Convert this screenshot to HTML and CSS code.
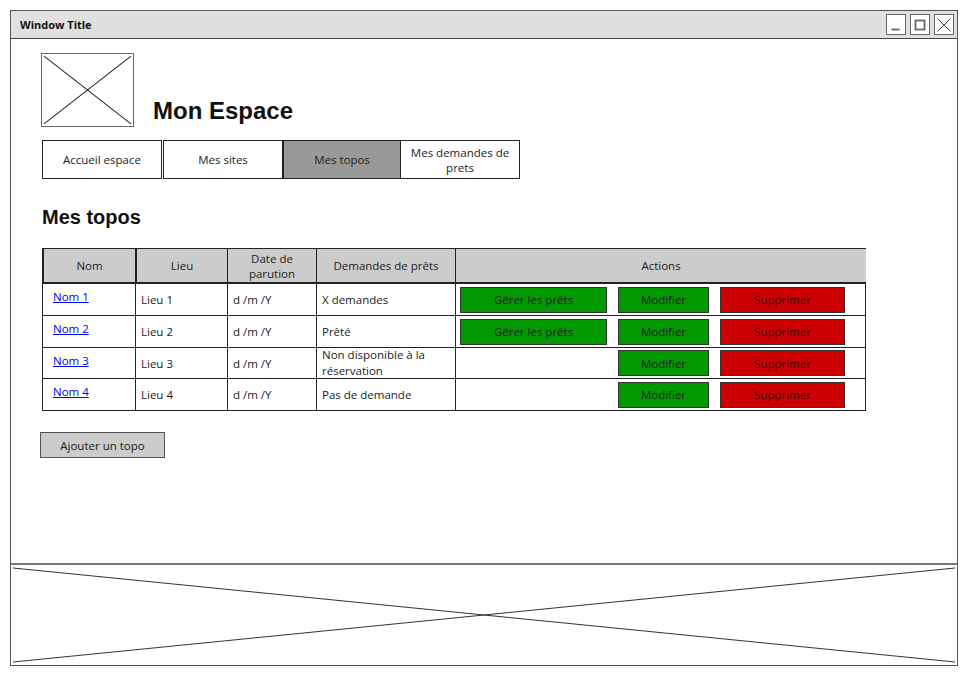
FILE: index.html
```html
<!DOCTYPE html>
<html lang="fr">
<head>
<meta charset="utf-8">
<title>Mon Espace</title>
<link rel="stylesheet" href="styles.css">
</head>
<body>
<div class="window">
  <div class="titlebar">
    <span class="wtitle">Window Title</span>
    <div class="wbtns">
      <span class="wbtn"><svg width="20" height="20" viewBox="0 0 20 20"><line x1="5" y1="15" x2="14" y2="15" stroke="#666" stroke-width="2"/></svg></span>
      <span class="wbtn"><svg width="20" height="20" viewBox="0 0 20 20"><rect x="5" y="5" width="10" height="10" fill="none" stroke="#666" stroke-width="2"/></svg></span>
      <span class="wbtn"><svg width="20" height="20" viewBox="0 0 20 20"><line x1="3" y1="3" x2="17" y2="17" stroke="#222" stroke-width="1"/><line x1="17" y1="3" x2="3" y2="17" stroke="#222" stroke-width="1"/></svg></span>
    </div>
  </div>
  <div class="content">
    <div class="head">
      <div class="logo"><svg width="100%" height="100%" viewBox="0 0 90 71" preserveAspectRatio="none"><line x1="2" y1="2" x2="88" y2="69" stroke="#222" stroke-width="1"/><line x1="88" y1="2" x2="2" y2="69" stroke="#222" stroke-width="1"/></svg></div>
      <h1 class="title">Mon Espace</h1>
    </div>
    <div class="tabs">
      <div class="tab">Accueil espace</div>
      <div class="tab">Mes sites</div>
      <div class="tab active">Mes topos</div>
      <div class="tab">Mes demandes de prets</div>
    </div>
    <h2 class="subtitle">Mes topos</h2>
    <div class="grid">
      <div class="th">Nom</div>
      <div class="th">Lieu</div>
      <div class="th">Date de parution</div>
      <div class="th">Demandes de prêts</div>
      <div class="th">Actions</div>

      <div class="td name"><a href="#">Nom 1</a></div>
      <div class="td">Lieu 1</div>
      <div class="td">d /m /Y</div>
      <div class="td">X demandes</div>
      <div class="td actions"><span class="btn green wide">Gérer les prêts</span><span class="btn green mid">Modifier</span><span class="btn red big">Supprimer</span></div>

      <div class="td name"><a href="#">Nom 2</a></div>
      <div class="td">Lieu 2</div>
      <div class="td">d /m /Y</div>
      <div class="td">Prêté</div>
      <div class="td actions"><span class="btn green wide">Gérer les prêts</span><span class="btn green mid">Modifier</span><span class="btn red big">Supprimer</span></div>

      <div class="td name"><a href="#">Nom 3</a></div>
      <div class="td">Lieu 3</div>
      <div class="td">d /m /Y</div>
      <div class="td small">Non disponible à la réservation</div>
      <div class="td actions"><span class="spacer"></span><span class="btn green mid">Modifier</span><span class="btn red big">Supprimer</span></div>

      <div class="td name"><a href="#">Nom 4</a></div>
      <div class="td">Lieu 4</div>
      <div class="td">d /m /Y</div>
      <div class="td">Pas de demande</div>
      <div class="td actions"><span class="spacer"></span><span class="btn green mid">Modifier</span><span class="btn red big">Supprimer</span></div>
    </div>
    <div class="addrow"><span class="addbtn">Ajouter un topo</span></div>
  </div>
  <div class="footer"><svg width="100%" height="100%" viewBox="0 0 946 100" preserveAspectRatio="none"><line x1="2" y1="3" x2="944" y2="97" stroke="#333" stroke-width="1"/><line x1="944" y1="3" x2="2" y2="97" stroke="#333" stroke-width="1"/></svg></div>
</div>
</body>
</html>
```
FILE: styles.css
```css
* { box-sizing: border-box; }
html, body { margin: 0; padding: 0; background: #fff; }
body { font-family: "Open Sans", "DejaVu Sans", sans-serif; color: #222; }

.window {
  margin: 10px 0 0 10px;
  width: 948px;
  height: 656px;
  border: 1.5px solid #555;
  display: flex;
  flex-direction: column;
  background: #fff;
}
.titlebar {
  height: 28px;
  background: #e0e0e0;
  border-bottom: 1.5px solid #444;
  display: flex;
  align-items: center;
  justify-content: space-between;
  padding: 0 3px 0 9px;
  flex: none;
}
.wtitle { font-size: 11px; font-weight: bold; color: #111; }
.wbtns { display: flex; gap: 4px; }
.wbtn {
  width: 20px; height: 21px;
  border: 1.5px solid #666;
  background: #fff;
  display: flex; align-items: center; justify-content: center;
}
.wbtn svg { width: 18px; height: 18px; }

.content { flex: 1; padding: 14px 0 0 30px; }
.head { display: flex; align-items: flex-end; }
.logo { width: 93px; height: 74px; border: 1.5px solid #666; flex: none; }
.title {
  margin: 0 0 2px 19px;
  font-family: "Liberation Sans", Arial, sans-serif;
  font-size: 24px;
  font-weight: bold;
  color: #111;
  line-height: 28px;
}
.tabs { display: flex; margin: 13px 0 0 1px; }
.tab {
  height: 39px;
  border: 1px solid #222;
  display: flex; align-items: center; justify-content: center;
  text-align: center;
  font-size: 11.5px;
  line-height: 15px;
  color: #222;
  padding: 0 6px;
}
.tab:nth-child(1) { width: 120px; margin-right: 1px; }
.tab:nth-child(2) { width: 120px; }
.tab:nth-child(3) { width: 118px; }
.tab:nth-child(4) { width: 119px; border-left: none; }
.tab.active { background: #999; }

.subtitle {
  margin: 26px 0 0 1px;
  font-family: "Liberation Sans", Arial, sans-serif;
  font-size: 20px;
  font-weight: bold;
  color: #111;
  line-height: 24px;
}
.grid {
  margin: 19px 0 0 1px;
  width: 824px;
  display: grid;
  grid-template-columns: 93px 92px 89px 139px 411px;
  grid-template-rows: 35px 32px 32px 31px 32px;
  border-right: 1px solid #222;
  border-bottom: 1px solid #222;
}
.th, .td {
  border-left: 1px solid #222;
  border-top: 1px solid #222;
  font-size: 11.5px;
  line-height: 15px;
  color: #222;
  display: flex;
  align-items: center;
}
.th { background: #ccc; justify-content: center; text-align: center; padding: 0 14px; border-bottom: 1px solid #222; }
.th:nth-child(-n+2) { border-left-width: 2px; }
.td { padding: 0 5px; }
.td.name { padding-left: 10px; align-items: flex-start; padding-top: 5px; }
.td.name a { color: #0000ee; text-decoration: underline; }
.td.small { line-height: 16px; font-size: 11.5px; }
.actions { padding: 0 0 0 4px; gap: 11px; }
.btn {
  height: 26px;
  border: 1px solid #333;
  display: flex; align-items: center; justify-content: center;
  font-size: 11.5px;
  color: #222;
}
.btn.green { background: #009900; }
.btn.red { background: #cc0000; color: #4a0000; }
.wide { width: 147px; }
.mid { width: 91px; }
.big { width: 125px; }
.spacer { width: 147px; }

.addrow { margin: 21px 0 0 -1px; }
.addbtn {
  display: inline-flex;
  width: 125px; height: 26px;
  align-items: center; justify-content: center;
  background: #ccc;
  border: 1.5px solid #555;
  font-size: 11.5px;
  color: #222;
}
.footer {
  height: 102px;
  border-top: 2px solid #777;
  flex: none;
}
.footer svg { display: block; }
```
